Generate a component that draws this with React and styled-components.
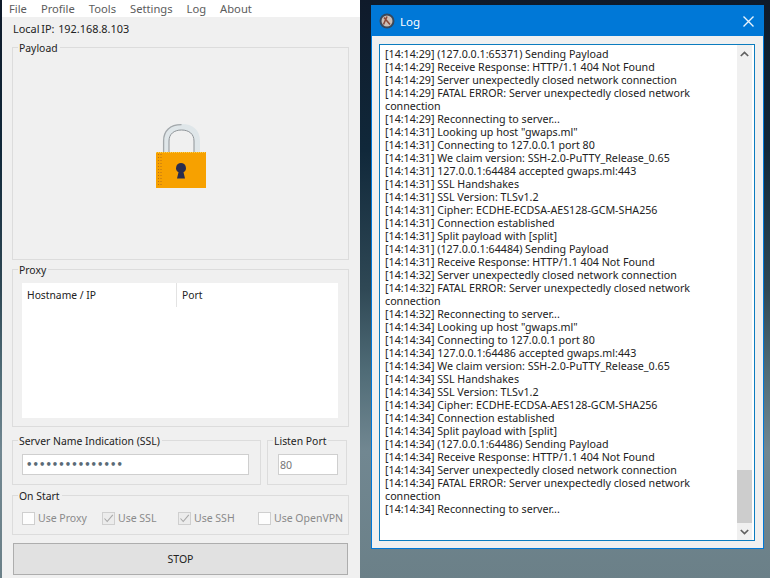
import React from "react";
import styled, { createGlobalStyle } from "styled-components";

const Global = createGlobalStyle`
  html, body { margin: 0; padding: 0; width: 770px; height: 578px; overflow: hidden; }
  * { box-sizing: border-box; }
  body { font-family: "Noto Sans", "Open Sans", sans-serif; font-size: 10.4px; color: #1a1a1a; }
`;

const Desktop = styled.div`
  width: 770px; height: 578px; display: flex; overflow: hidden; padding-left: 2px;
  background: linear-gradient(180deg, #0f1a2a 0%, #10283a 26%, #2f4855 50%, #4f6b76 64%, #718791 78%, #6b8088 100%);
`;
const MainWindow = styled.div`
  width: 358px; height: 578px; flex: none; background: #f0f0f0; display: flex; flex-direction: column;
`;
const MenuBar = styled.div`
  height: 17px; background: #fff; display: flex; align-items: center; padding: 0 0 0 7px; gap: 14px; color: #5c5c5c; font-size: 11.2px; flex: none;
`;
const MenuItem = styled.span` line-height: 17px; `;
const IpLine = styled.div`
  height: 24px; padding: 0 0 0 11px; line-height: 24px; color: #222; font-size: 10.9px; word-spacing: -1px; flex: none; white-space: pre;
`;
const Content = styled.div`
  display: flex; flex-direction: column; padding: 6px 11px 0 10px;
`;
const Group = styled.div`
  position: relative; border: 1px solid #dcdcdc; height: ${p => p.$h}px; margin-top: ${p => p.$mt || 0}px;
  width: ${p => (p.$w ? p.$w + "px" : "auto")}; padding: ${p => p.$pad || "0"};
  flex: none;
`;
const Legend = styled.span`
  position: absolute; left: 5px; top: -7px; background: #f0f0f0; padding: 0 2px 0 1px; line-height: 14px; color: #222; font-size: 10.4px; white-space: nowrap;
`;
const LockArea = styled.div`
  height: 100%; display: flex; align-items: flex-start; justify-content: center; padding-top: 76px;
`;
const ProxyTable = styled.div`
  background: #fff; height: 135px; display: grid; grid-template-columns: 154px 1fr; align-content: start; color: #222;
`;
const HeadCell = styled.div`
  height: 24px; line-height: 24px; padding-left: 5px;
  border-left: ${p => (p.$first ? "none" : "1px solid #e3e3e3")}; font-size: 10.3px;
`;
const Row = styled.div`
  display: flex; gap: 6px; margin-top: ${p => p.$mt}px;
`;
const TextField = styled.div`
  background: #fff; border: 1px solid #cfcfcf; height: 21px; display: flex; align-items: center; padding-left: ${p => p.$indent}px;
  font-size: 10.6px; color: ${p => (p.$muted ? "#777" : "#5a6a76")}; width: 100%;
`;
const Dots = styled.span` letter-spacing: 0.07px; font-size: 10px; line-height: 1; font-family: "DejaVu Sans", sans-serif; font-weight: bold; `;
const CheckRow = styled.div`
  display: grid; grid-template-columns: 80px 76px 80px auto; padding: 16px 0 0 9px; align-items: center;
`;
const Check = styled.label`
  display: flex; align-items: center; gap: 3px; color: #8a8a8a; font-size: 10.5px; line-height: 13px; white-space: nowrap;
`;
const Box = styled.span`
  width: 13px; height: 13px; border: 1px solid #cfcfcf; background: ${p => (p.$checked ? "#ececec" : "#fdfdfd")}; display: flex; flex: none;
`;
const StopButton = styled.button`
  margin: 8px 0 0 1px; width: 335px; height: 32px; background: #e1e1e1; border: 1px solid #adadad; color: #222; font-family: inherit; font-size: 10.5px; padding: 0; flex: none;
`;

const LogWindow = styled.div`
  margin: 5px 0 0 11px; width: 393px; height: 544px; background: #f0f0f0; border: 1px solid #0078d7; display: flex; flex-direction: column; flex: none;
`;
const TitleBar = styled.div`
  height: 30px; background: #0078d7; display: flex; align-items: center; padding: 0 8px 0 7px; color: #fff; flex: none;
`;
const TitleText = styled.span` font-size: 11.5px; margin-left: 5px; flex: 1; `;
const LogBody = styled.div`
  margin: 8px 8px 0 7px; height: 497px; background: #fff; border: 1px solid #0b7cbf; display: flex; flex: none; padding-right: 2px;
`;
const LogText = styled.div`
  flex: 1; padding: 3px 0 0 5px; font-size: 10.7px; line-height: 13px; color: #222; min-width: 0; overflow: hidden;
`;
const LogLine = styled.div` white-space: normal; `;
const ScrollBar = styled.div`
  width: 15px; background: #f0f0f0; display: flex; flex-direction: column; flex: none;
`;
const ScrollButton = styled.div` height: 17px; display: flex; align-items: center; justify-content: center; flex: none; `;
const ScrollTrack = styled.div` flex: 1; display: flex; flex-direction: column; justify-content: flex-end; `;
const ScrollThumb = styled.div` height: 53px; background: #cdcdcd; `;

const names = ["File", "Profile", "Tools", "Settings", "Log", "About"];

const tail = (a, b, port) => [
  `[14:14:${a}] SSL Handshakes`,
  `[14:14:${a}] SSL Version: TLSv1.2`,
  `[14:14:${a}] Cipher: ECDHE-ECDSA-AES128-GCM-SHA256`,
  `[14:14:${a}] Connection established`,
  `[14:14:${a}] Split payload with [split]`,
  `[14:14:${a}] (127.0.0.1:${port}) Sending Payload`,
  `[14:14:${a}] Receive Response: HTTP/1.1 404 Not Found`,
  `[14:14:${b}] Server unexpectedly closed network connection`,
  `[14:14:${b}] FATAL ERROR: Server unexpectedly closed network connection`,
  `[14:14:${b}] Reconnecting to server...`,
];
const lines = [
  "[14:14:29] (127.0.0.1:65371) Sending Payload",
  "[14:14:29] Receive Response: HTTP/1.1 404 Not Found",
  "[14:14:29] Server unexpectedly closed network connection",
  "[14:14:29] FATAL ERROR: Server unexpectedly closed network connection",
  "[14:14:29] Reconnecting to server...",
  '[14:14:31] Looking up host "gwaps.ml"',
  "[14:14:31] Connecting to 127.0.0.1 port 80",
  "[14:14:31] We claim version: SSH-2.0-PuTTY_Release_0.65",
  "[14:14:31] 127.0.0.1:64484 accepted gwaps.ml:443",
  ...tail("31", "32", 64484),
  '[14:14:34] Looking up host "gwaps.ml"',
  "[14:14:34] Connecting to 127.0.0.1 port 80",
  "[14:14:34] 127.0.0.1:64486 accepted gwaps.ml:443",
  "[14:14:34] We claim version: SSH-2.0-PuTTY_Release_0.65",
  ...tail("34", "34", 64486),
];

const Lock = () => (
  <svg width="50" height="64" viewBox="0 0 50 64">
    <path d="M7 29V17C7 6 14 0 25.5 0S44 6 44 17v12h-6V17c0-7-5-11-12.5-11S13 10 13 17v12z" fill="#dfe6e9" />
    <path d="M7.6 29V17C7.6 6.5 14 .7 25.5 .7" fill="none" stroke="#a3a8ab" strokeWidth="1.3" />
    <path d="M13 29V17c0-7 5-11 12.5-11S38 10 38 17v12" fill="none" stroke="#8f9498" strokeWidth="1" />
    <rect x="0" y="28" width="50" height="36" fill="#f7a100" />
    <path d="M0 28.5h50" stroke="#f9d04e" strokeWidth="1" strokeDasharray="1 1" />
    <path d="M2.5 30v33M5 30v33" stroke="#b8701a" strokeWidth="1" strokeDasharray="1 2" />
    <path d="M25 39a5 5 0 0 1 2.5 9.3l1.500 6.200h-8l1.500-6.200A5 5 0 0 1 25 39z" fill="#2a2d4d" />
  </svg>
);
const CheckMark = () => (
  <svg width="11" height="11" viewBox="0 0 11 11"><path d="M1.5 5.5 4.2 8.5 9.8 1.8" fill="none" stroke="#a8a8a8" strokeWidth="1.1" /></svg>
);
const Chevron = ({ up }) => (
  <svg width="9" height="6" viewBox="0 0 9 6"><path d={up ? "M.8 5 4.5 1.4 8.2 5" : "M.8 1 4.5 4.6 8.2 1"} fill="none" stroke="#606060" strokeWidth="1.7" /></svg>
);
const AppIcon = () => (
  <svg width="16" height="16" viewBox="0 0 16 16">
    <circle cx="8" cy="8" r="7.5" fill="#39485a" />
    <circle cx="8" cy="8" r="5.5" fill="#cdbfb6" />
    <path d="M5 4.5l6 7M8 3.500l-3.500 8" stroke="#8a4a3a" strokeWidth="1.6" fill="none" />
  </svg>
);
const CloseIcon = () => (
  <svg width="13" height="13" viewBox="0 0 13 13"><path d="M1.5 1.5l10 10M11.5 1.5l-10 10" stroke="#eaf4fc" strokeWidth="1.4" /></svg>
);

export default function App() {
  return (
    <Desktop>
      <Global />
      <MainWindow>
        <MenuBar>{names.map(n => <MenuItem key={n}>{n}</MenuItem>)}</MenuBar>
        <IpLine>Local IP:  192.168.8.103</IpLine>
        <Content>
          <Group $h={213}>
            <Legend>Payload</Legend>
            <LockArea><Lock /></LockArea>
          </Group>
          <Group $h={158} $mt={9} $pad="13px 10px 0 9px">
            <Legend>Proxy</Legend>
            <ProxyTable>
              <HeadCell $first>Hostname / IP</HeadCell>
              <HeadCell>Port</HeadCell>
            </ProxyTable>
          </Group>
          <Row $mt={13}>
            <Group $w={249} $h={45} $pad="13px 11px 0 9px">
              <Legend>Server Name Indication (SSL)</Legend>
              <TextField $indent={3}><Dots>•••••••••••••••</Dots></TextField>
            </Group>
            <Group $w={80} $h={45} $pad="13px 8px 0 10px">
              <Legend>Listen Port</Legend>
              <TextField $muted $indent={1}>80</TextField>
            </Group>
          </Row>
          <Group $h={40} $mt={10}>
            <Legend>On Start</Legend>
            <CheckRow>
              <Check><Box />Use Proxy</Check>
              <Check><Box $checked><CheckMark /></Box>Use SSL</Check>
              <Check><Box $checked><CheckMark /></Box>Use SSH</Check>
              <Check><Box />Use OpenVPN</Check>
            </CheckRow>
          </Group>
          <StopButton>STOP</StopButton>
        </Content>
      </MainWindow>
      <LogWindow>
        <TitleBar>
          <AppIcon />
          <TitleText>Log</TitleText>
          <CloseIcon />
        </TitleBar>
        <LogBody>
          <LogText>{lines.map((l, i) => <LogLine key={i}>{l}</LogLine>)}</LogText>
          <ScrollBar>
            <ScrollButton><Chevron up /></ScrollButton>
            <ScrollTrack><ScrollThumb /></ScrollTrack>
            <ScrollButton><Chevron /></ScrollButton>
          </ScrollBar>
        </LogBody>
      </LogWindow>
    </Desktop>
  );
}
